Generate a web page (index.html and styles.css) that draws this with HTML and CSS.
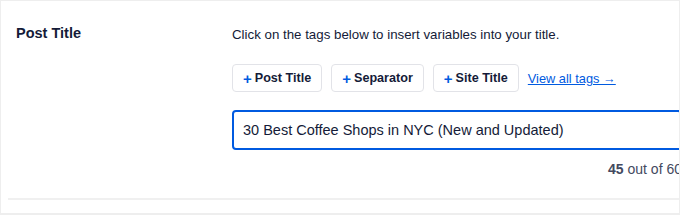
FILE: index.html
```html
<!DOCTYPE html>
<html>
<head>
<meta charset="utf-8">
<link rel="stylesheet" href="styles.css">
</head>
<body>
<div class="card">
  <div class="row">
    <div class="label">Post Title</div>
    <div class="content">
      <p class="desc">Click on the tags below to insert variables into your title.</p>
      <div class="tags">
        <button class="tag"><span class="plus">+</span>Post Title</button>
        <button class="tag"><span class="plus">+</span>Separator</button>
        <button class="tag"><span class="plus">+</span>Site Title</button>
        <a class="all" href="#">View all tags →</a>
      </div>
      <div class="input">30 Best Coffee Shops in NYC (New and Updated)</div>
      <div class="count"><b>45</b> out of 60</div>
    </div>
  </div>
</div>
</body>
</html>
```
FILE: styles.css
```css
html, body {
  margin: 0;
  padding: 0;
  background: #fff;
}
body {
  font-family: "Liberation Sans", Arial, sans-serif;
  color: #141b38;
}
.card {
  width: 680px;
  height: 215px;
  box-sizing: border-box;
  border: 1px solid #eeeeee;
  border-bottom-width: 2px;
  overflow: hidden;
  padding: 0 0 0 7px;
}
.row {
  display: flex;
  width: 700px;
  padding: 20px 0 19px 8px;
  border-bottom: 2px solid #f0f0f0;
}
.label {
  width: 216px;
  flex: none;
  font-size: 14.5px;
  font-weight: 700;
  line-height: 22px;
  padding-top: 1px;
}
.content {
  width: 450px;
  flex: none;
}
.desc {
  margin: 0;
  font-size: 13.3px;
  line-height: 24px;
  padding-top: 2px;
}
.tags {
  display: flex;
  align-items: center;
  gap: 9px;
  margin-top: 17px;
}
.tag {
  font-family: inherit;
  font-size: 12.6px;
  font-weight: 700;
  color: #141b38;
  background: #fff;
  border: 1px solid #e2e3e8;
  border-radius: 4px;
  height: 28px;
  padding: 0 10px;
  display: flex;
  align-items: center;
}
.plus {
  color: #005ae0;
  margin-right: 3px;
  font-size: 15px;
}
.all {
  color: #005ae0;
  font-size: 12.8px;
  margin-left: 0;
}
.input {
  margin-top: 18px;
  height: 40px;
  box-sizing: border-box;
  border: 2px solid #005ae0;
  border-radius: 4px;
  font-size: 14.5px;
  line-height: 36px;
  padding: 0 9px;
}
.count {
  text-align: right;
  font-size: 14px;
  color: #434960;
  line-height: 20px;
  margin-top: 9px;
}
.count b {
  font-weight: 700;
}
```
